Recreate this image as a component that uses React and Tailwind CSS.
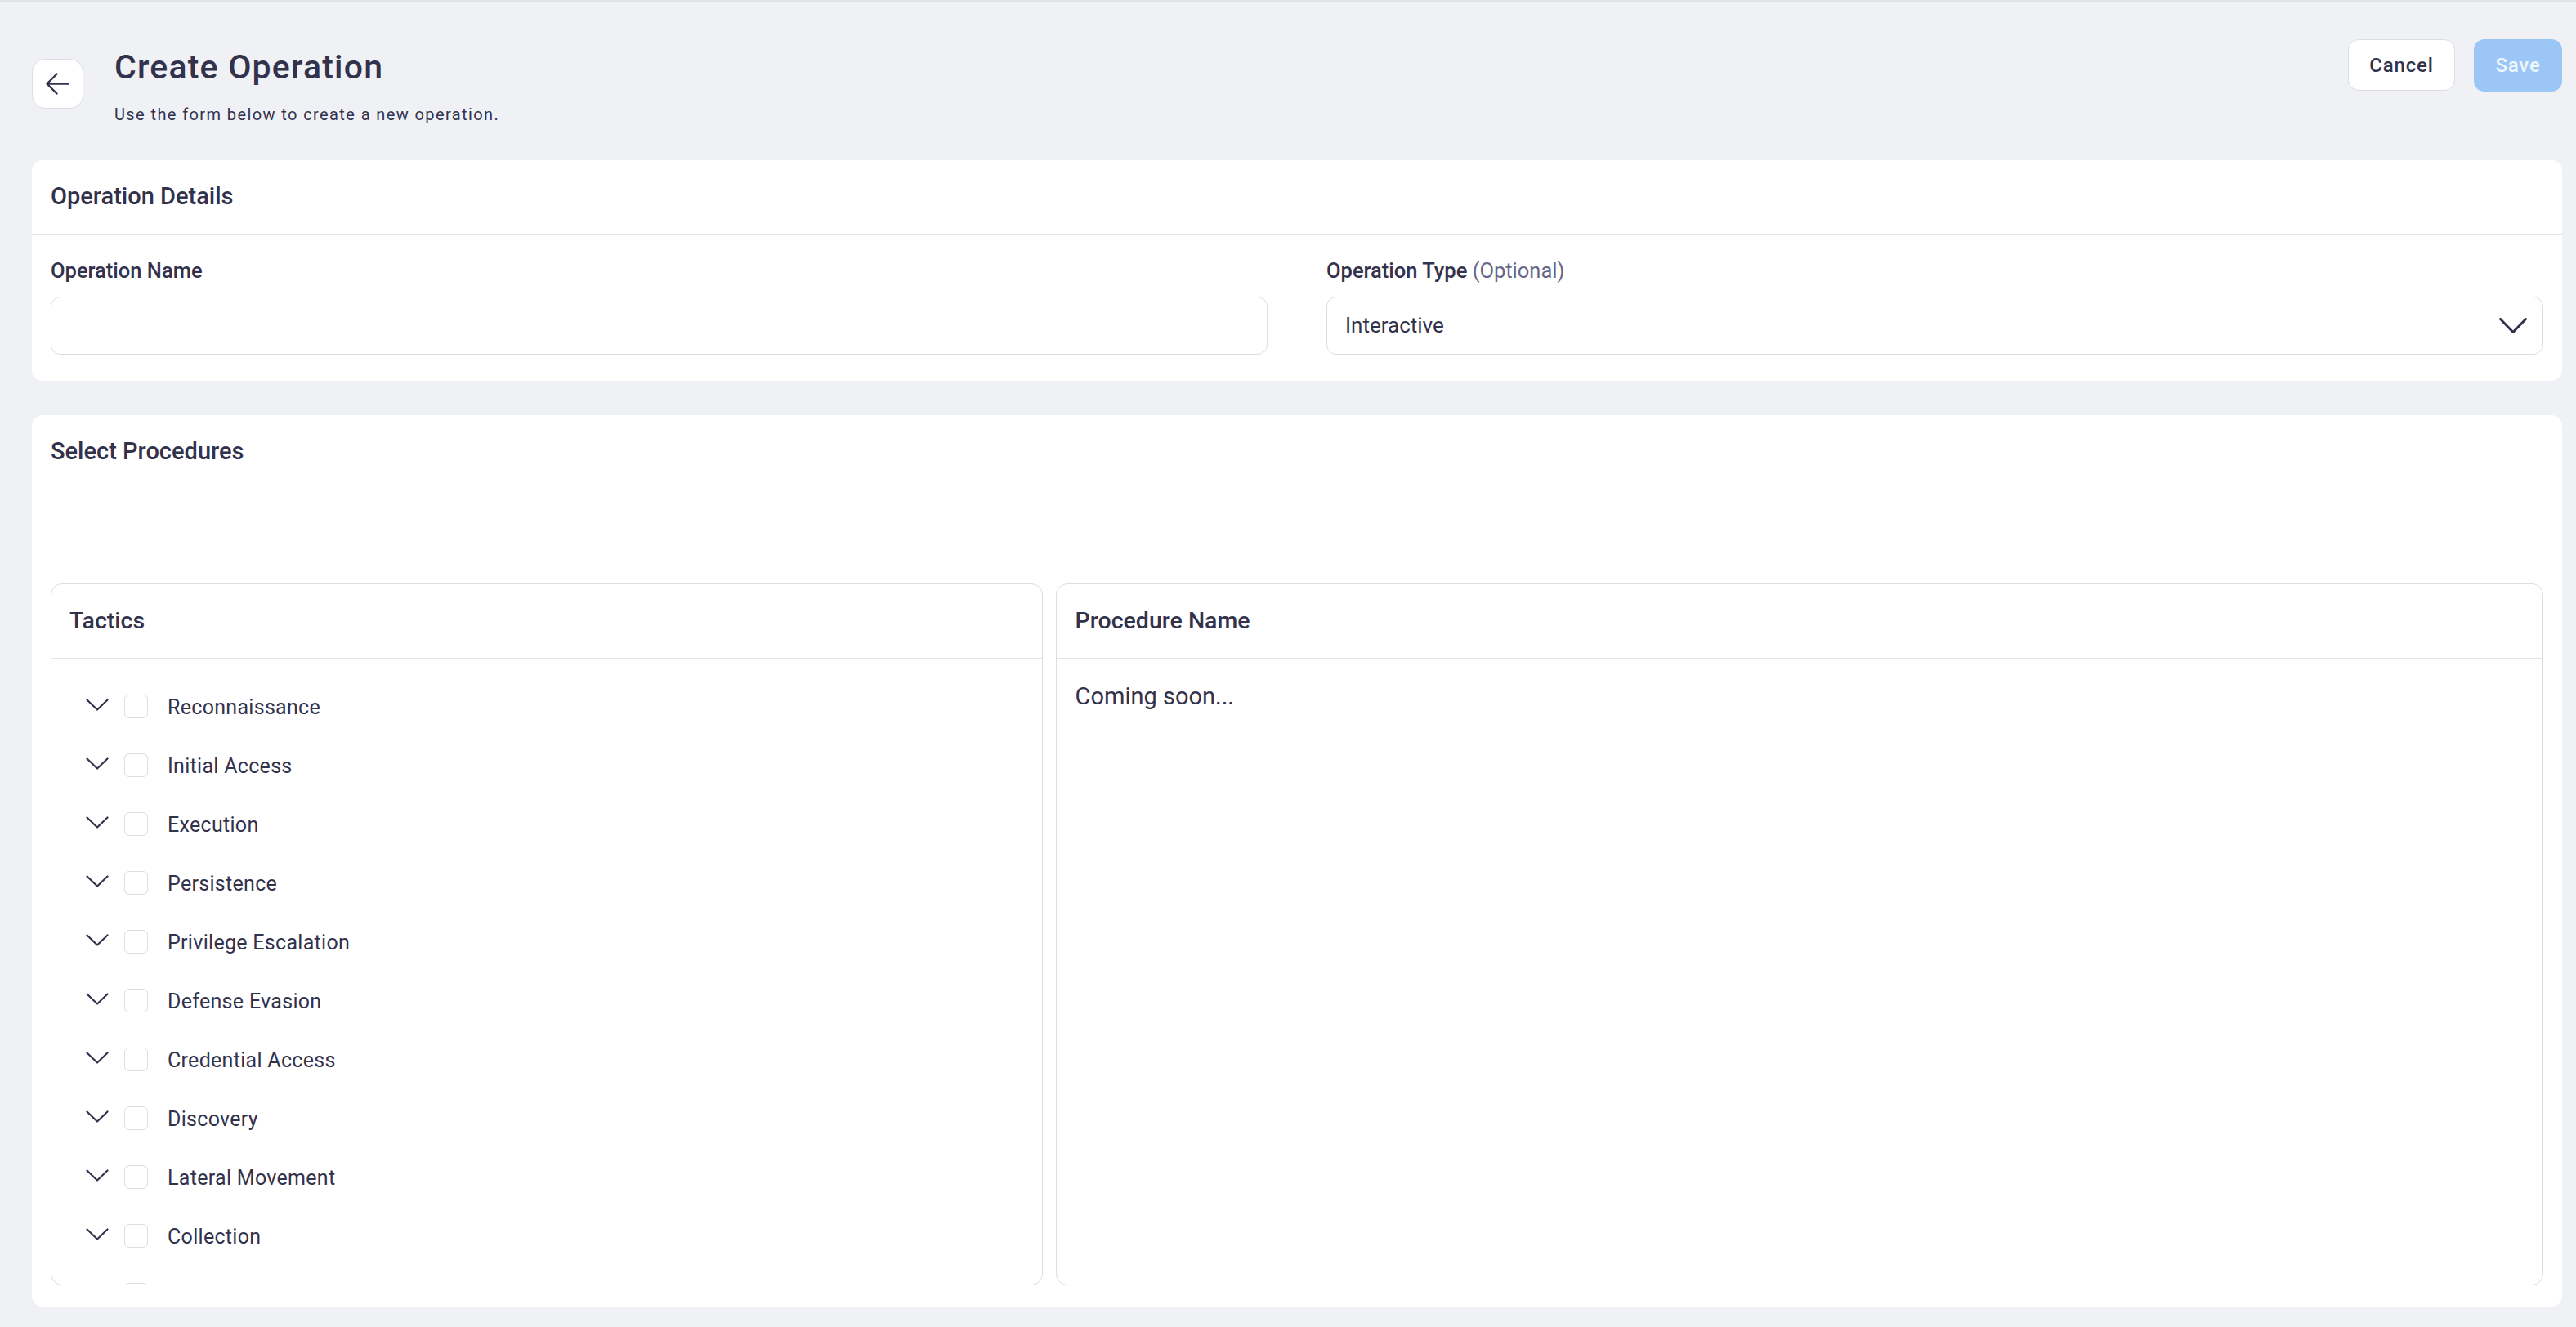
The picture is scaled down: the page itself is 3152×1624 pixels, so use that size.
import React from 'react';

const tactics = [
  'Reconnaissance',
  'Initial Access',
  'Execution',
  'Persistence',
  'Privilege Escalation',
  'Defense Evasion',
  'Credential Access',
  'Discovery',
  'Lateral Movement',
  'Collection',
  'Command and Control',
  'Exfiltration',
  'Impact',
];

const ArrowLeft = () => (
  <svg width="29" height="27" viewBox="0 0 29 27" fill="none" stroke="#32324d" strokeWidth="2.4" strokeLinecap="round" strokeLinejoin="round">
    <path d="M27.5 13.5H2" />
    <path d="M13.5 1.5L1.5 13.5L13.5 25.5" />
  </svg>
);

const ChevronDown = ({ w, h, stroke }) => (
  <svg width={w} height={h} viewBox={`0 0 ${w} ${h}`} fill="none" stroke="#32324d" strokeWidth={stroke} strokeLinecap="round" strokeLinejoin="round">
    <path d={`M1.5 1.5L${w / 2} ${h - 1.5}L${w - 1.5} 1.5`} />
  </svg>
);

const App = () => {
  return (
    <div className="min-h-screen bg-[#f0f1f5] border-t-2 border-[#e1e2e8] pl-[39px] pr-[17px] pb-[25px] font-['Roboto',sans-serif] text-[#32324d]">
      <header className="flex items-start justify-between pt-[46px]">
        <div className="flex items-start">
          <button className="mt-[24px] w-[63px] h-[61px] rounded-[16px] bg-white border border-[#dcdce4] flex items-center justify-center">
            <ArrowLeft />
          </button>
          <div className="ml-[38px] mt-[10px]">
            <h1 className="text-[41px] leading-[48px] font-medium tracking-[1.2px]">Create Operation</h1>
            <p className="mt-[20px] text-[20px] leading-[28px] tracking-[1.4px]">Use the form below to create a new operation.</p>
          </div>
        </div>
        <div className="flex items-start gap-[23px]">
          <button className="w-[131px] h-[63px] rounded-[13px] bg-white border border-[#dcdce4] text-[24px] font-medium tracking-[0.8px]">
            Cancel
          </button>
          <button className="w-[108px] h-[64px] rounded-[13px] bg-[#9bc6f6] text-[24px] font-medium tracking-[0.8px] text-[#eef6fe]">
            Save
          </button>
        </div>
      </header>

      <section className="mt-[42px] bg-white rounded-[13px]">
        <div className="h-[91px] border-b border-[#e3e3ea] px-[23px] flex items-center">
          <h2 className="text-[29px] font-medium">Operation Details</h2>
        </div>
        <div className="pt-[28px] px-[23px] pb-[32px] grid grid-cols-2 gap-x-[72px]">
          <div>
            <label className="block text-[25.5px] leading-[32px] font-medium mb-[16px]">Operation Name</label>
            <input className="w-full h-[71px] rounded-[12px] border border-[#dcdce4] bg-white px-[22px] text-[26px] outline-none" />
          </div>
          <div>
            <label className="block text-[25.5px] leading-[32px] font-medium mb-[16px]">
              Operation Type <span className="font-normal text-[#666687]">(Optional)</span>
            </label>
            <div className="w-full h-[71px] rounded-[12px] border border-[#dcdce4] bg-white pl-[22px] pr-[19px] flex items-center justify-between">
              <span className="text-[26px]">Interactive</span>
              <ChevronDown w={34} h={19} stroke={3} />
            </div>
          </div>
        </div>
      </section>

      <section className="mt-[42px] bg-white rounded-[13px]">
        <div className="h-[91px] border-b border-[#e3e3ea] px-[23px] flex items-center">
          <h2 className="text-[29px] font-medium">Select Procedures</h2>
        </div>
        <div className="pt-[115px] px-[23px] pb-[26px]">
          <div className="h-[859px] flex gap-[16px]">
            <div className="w-2/5 border border-[#dcdce4] rounded-[14px] flex flex-col overflow-hidden">
              <div className="h-[91px] shrink-0 border-b border-[#e3e3ea] px-[22px] flex items-center">
                <h3 className="text-[28.5px] font-medium">Tactics</h3>
              </div>
              <ul className="flex-1 overflow-hidden pt-[23px] pl-[42px]">
                {tactics.map((tactic) => (
                  <li key={tactic} className="h-[72px] flex items-center">
                    <span className="-mt-[6px] flex">
                      <ChevronDown w={28} h={15} stroke={2.2} />
                    </span>
                    <span className="-mt-[2px] ml-[19px] w-[29px] h-[29px] rounded-[6px] border border-[#dcdce4] bg-white" />
                    <span className="mt-[2px] ml-[24px] text-[25px] tracking-[0.3px]">{tactic}</span>
                  </li>
                ))}
              </ul>
            </div>
            <div className="w-3/5 border border-[#dcdce4] rounded-[14px] flex flex-col overflow-hidden">
              <div className="h-[91px] shrink-0 border-b border-[#e3e3ea] px-[23px] flex items-center">
                <h3 className="text-[28.5px] font-medium">Procedure Name</h3>
              </div>
              <div className="pt-[28px] px-[23px]">
                <p className="text-[29px] leading-[36px]">Coming soon...</p>
              </div>
            </div>
          </div>
        </div>
      </section>
    </div>
  );
};

export default App;
